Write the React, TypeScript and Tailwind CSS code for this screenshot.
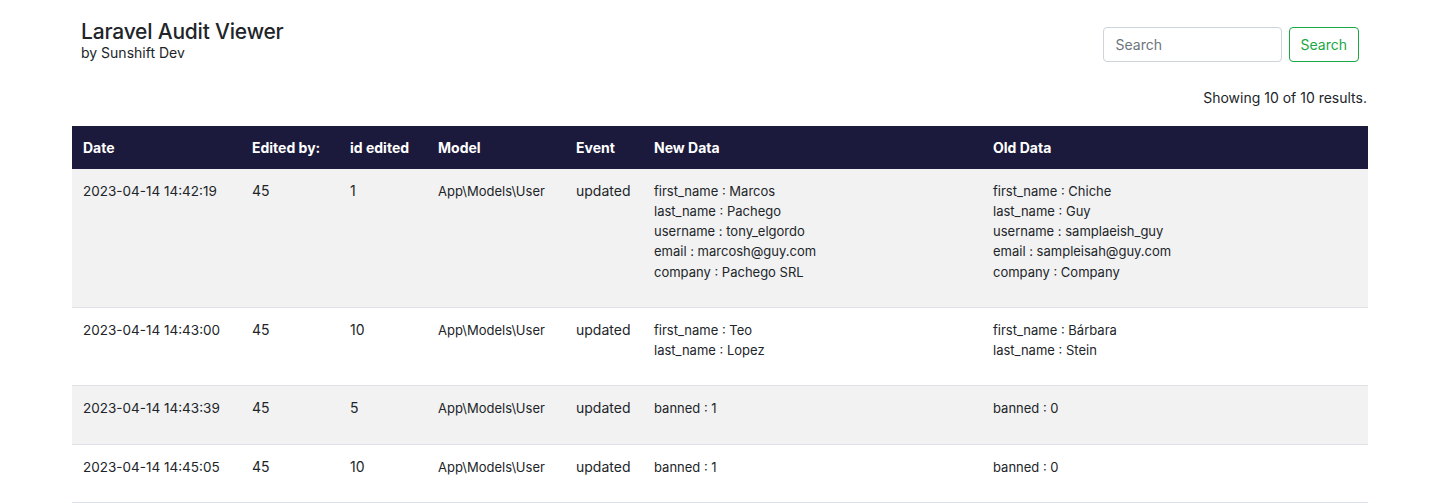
import React from "react";

interface Audit {
  date: string;
  user: string;
  id: string;
  model: string;
  event: string;
  newData: string[];
  oldData: string[];
}

const audits: Audit[] = [
  {
    date: "2023-04-14 14:42:19",
    user: "45",
    id: "1",
    model: "App\\Models\\User",
    event: "updated",
    newData: [
      "first_name : Marcos",
      "last_name : Pachego",
      "username : tony_elgordo",
      "email : marcosh@guy.com",
      "company : Pachego SRL",
    ],
    oldData: [
      "first_name : Chiche",
      "last_name : Guy",
      "username : samplaeish_guy",
      "email : sampleisah@guy.com",
      "company : Company",
    ],
  },
  {
    date: "2023-04-14 14:43:00",
    user: "45",
    id: "10",
    model: "App\\Models\\User",
    event: "updated",
    newData: ["first_name : Teo", "last_name : Lopez"],
    oldData: ["first_name : Bárbara", "last_name : Stein"],
  },
  {
    date: "2023-04-14 14:43:39",
    user: "45",
    id: "5",
    model: "App\\Models\\User",
    event: "updated",
    newData: ["banned : 1"],
    oldData: ["banned : 0"],
  },
  {
    date: "2023-04-14 14:45:05",
    user: "45",
    id: "10",
    model: "App\\Models\\User",
    event: "updated",
    newData: ["banned : 1"],
    oldData: ["banned : 0"],
  },
];

const columns = [
  { label: "Date", w: "w-[169px]" },
  { label: "Edited by:", w: "w-[98px]" },
  { label: "id edited", w: "w-[88px]" },
  { label: "Model", w: "w-[138px]" },
  { label: "Event", w: "w-[78px]" },
  { label: "New Data", w: "w-[339px]" },
  { label: "Old Data", w: "" },
];

const cell = "px-[11px] pt-[12px] pb-[25px] leading-[20px]";

export default function App() {
  return (
    <div
      className="min-h-screen bg-white text-[#212529] text-[14px] leading-[20px]"
      style={{ fontFamily: "Inter, 'Noto Sans', sans-serif" }}
    >
      <div className="mx-auto w-[1296px]">
        {/* Header */}
        <div className="flex items-start justify-between px-[9px] pt-[19px]">
          <div>
            <h1 className="text-[21px] leading-[25px] font-medium tracking-[-0.2px]">
              Laravel Audit Viewer
            </h1>
            <p className="text-[14px] leading-[18px]">by Sunshift Dev</p>
          </div>
          <form className="flex gap-[7px] pt-[8px]">
            <input
              placeholder="Search"
              className="w-[179px] h-[35px] px-[12px] border border-[#ced4da] rounded-[4px] text-[14px] placeholder:text-[#6c757d] outline-none"
            />
            <button
              type="button"
              className="h-[35px] px-[11px] border border-[#1aa744] text-[#1aa744] rounded-[4px] text-[14px]"
            >
              Search
            </button>
          </form>
        </div>

        <p className="text-right pt-[26px] pb-[18px] pr-[1px]">
          Showing 10 of 10 results.
        </p>

        {/* Table */}
        <table className="w-full border-collapse table-fixed">
          <thead>
            <tr className="bg-[#1c1a3c] text-white">
              {columns.map((c) => (
                <th
                  key={c.label}
                  className={`${c.w} text-left font-bold px-[11px] pt-[11.5px] pb-[11px] leading-[20px]`}
                >
                  {c.label}
                </th>
              ))}
            </tr>
          </thead>
          <tbody>
            {audits.map((a, i) => (
              <tr
                key={i}
                className={`${i % 2 === 0 ? "bg-[#f2f2f2]" : "bg-white"} border-b border-[#dee2e6] align-top`}
              >
                <td className={`${cell} text-[13.5px]`}>{a.date}</td>
                <td className={cell}>{a.user}</td>
                <td className={cell}>{a.id}</td>
                <td className={`${cell} text-[13px]`}>{a.model}</td>
                <td className={cell}>{a.event}</td>
                <td className={`${cell} text-[13px]`}>
                  {a.newData.map((l) => (
                    <div key={l} className="leading-[20.25px]">
                      {l}
                    </div>
                  ))}
                </td>
                <td className={`${cell} text-[13px]`}>
                  {a.oldData.map((l) => (
                    <div key={l} className="leading-[20.25px]">
                      {l}
                    </div>
                  ))}
                </td>
              </tr>
            ))}
          </tbody>
        </table>
      </div>
    </div>
  );
}
